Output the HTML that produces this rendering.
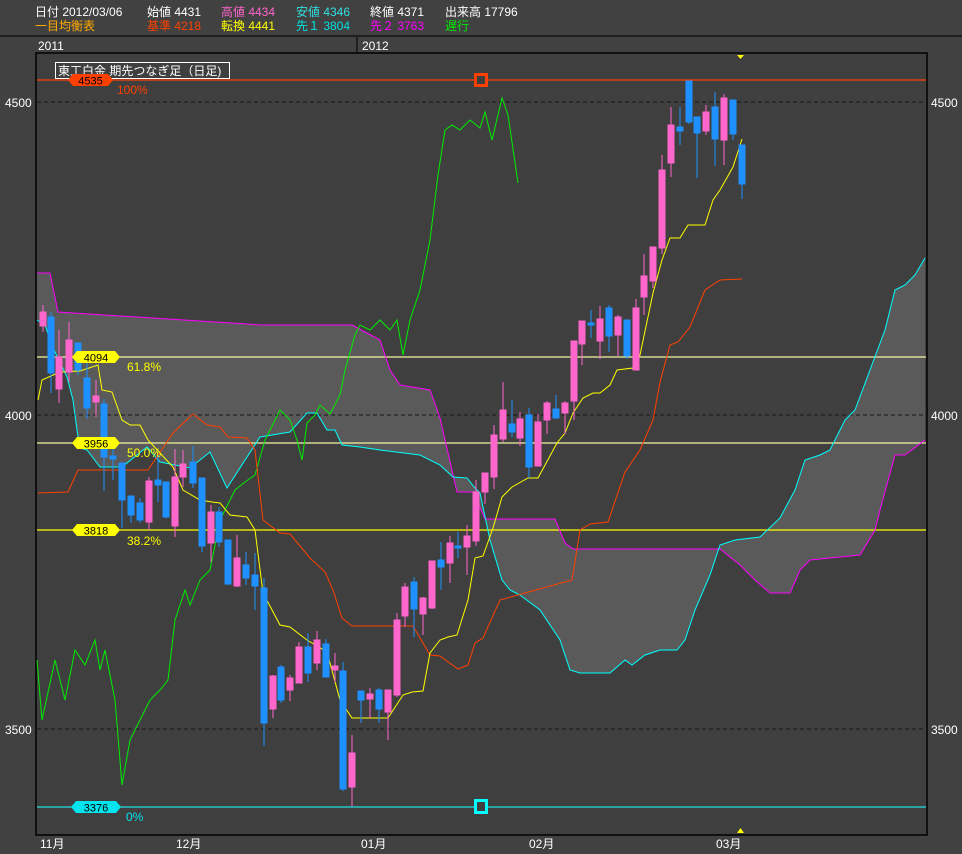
<!DOCTYPE html>
<html><head><meta charset="utf-8"><style>
html,body{margin:0;padding:0;background:#414141;width:962px;height:854px;overflow:hidden}
svg{display:block}
text{font-family:"Liberation Sans","Noto Sans CJK JP",sans-serif;font-size:12px}
</style></head><body>
<svg width="962" height="854" viewBox="0 0 962 854" xmlns="http://www.w3.org/2000/svg">
<rect width="962" height="854" fill="#414141"/>
<text x="35" y="16" fill="#fff">日付 2012/03/06</text>
<text x="147" y="16" fill="#fff">始値 4431</text>
<text x="221" y="16" fill="#ff66cc">高値 4434</text>
<text x="296" y="16" fill="#33e0e0">安値 4346</text>
<text x="370" y="16" fill="#fff">終値 4371</text>
<text x="445" y="16" fill="#fff">出来高 17796</text>
<text x="35" y="30" fill="#ffaa00">一目均衡表</text>
<text x="147" y="30" fill="#ff4000">基準 4218</text>
<text x="221" y="30" fill="#ffff00">転換 4441</text>
<text x="296" y="30" fill="#00e0e0">先１ 3804</text>
<text x="370" y="30" fill="#ff00ff">先２ 3763</text>
<text x="445" y="30" fill="#00ee00">遅行</text>
<line x1="0" y1="36" x2="962" y2="36" stroke="#000" stroke-width="1"/>
<line x1="357" y1="37" x2="357" y2="53" stroke="#000"/>
<text x="38" y="50" fill="#fff">2011</text>
<text x="362" y="50" fill="#fff">2012</text>
<rect x="36" y="53" width="891" height="782" fill="#3f3f3f" stroke="#000" stroke-width="1.5"/>
<polygon fill="#5a5a5a" points="37,320 45,325 53,348 67,377 73,400 77,430 80,448 87,450 100,467 122,467 147,447 160,462 190,468 210,452 227,488 260,437 290,432 307,413 317,413 327,430 335,430 342,445 360,447 380,450 420,455 440,465 453,477 467,478 475,488 480,493 490,540 502,580 510,590 520,595 540,610 560,640 570,670 580,673 610,673 625,660 632,665 645,655 660,650 677,650 685,640 695,610 710,575 720,545 735,540 760,537 780,518 795,490 805,460 820,455 830,450 845,420 855,410 870,370 885,330 895,290 905,285 915,275 925,258 925,440 905,455 895,455 880,510 875,530 860,555 810,560 800,570 790,593 770,593 755,580 740,565 720,549 573,549 565,543 555,519 485,519 473,492 457,492 440,418 430,390 400,385 390,370 380,340 352,325 262,325 58,312 50,273 37,273"/>
<g stroke="#151515" stroke-dasharray="4,3" stroke-width="1">
<line x1="37" y1="102" x2="926" y2="102"/>
<line x1="37" y1="415" x2="926" y2="415"/>
<line x1="37" y1="729" x2="926" y2="729"/>
</g>
<line x1="37" y1="80" x2="926" y2="80" stroke="#ff4000" stroke-width="1.2"/>
<line x1="37" y1="357" x2="926" y2="357" stroke="#f4f4a0" stroke-width="1.2"/>
<line x1="37" y1="443" x2="926" y2="443" stroke="#f4f4a0" stroke-width="1.2"/>
<line x1="37" y1="530" x2="926" y2="530" stroke="#ffff00" stroke-width="1.2"/>
<line x1="37" y1="807" x2="926" y2="807" stroke="#22dddd" stroke-width="1.2"/>
<g fill="none" stroke-width="1">
<polyline stroke="#ff00ff" points="37,273 50,273 58,312 262,325 352,325 380,340 390,370 400,385 430,390 440,418 457,492 473,492 485,519 555,519 565,543 573,549 720,549 740,565 755,580 770,593 790,593 800,570 810,560 860,555 875,530 880,510 895,455 905,455 925,440"/>
<polyline stroke="#00ffff" points="37,320 45,325 53,348 67,377 73,400 77,430 80,448 87,450 100,467 122,467 147,447 160,462 190,468 210,452 227,488 260,437 290,432 307,413 317,413 327,430 335,430 342,445 360,447 380,450 420,455 440,465 453,477 467,478 475,488 480,493 490,540 502,580 510,590 520,595 540,610 560,640 570,670 580,673 610,673 625,660 632,665 645,655 660,650 677,650 685,640 695,610 710,575 720,545 735,540 760,537 780,518 795,490 805,460 820,455 830,450 845,420 855,410 870,370 885,330 895,290 905,285 915,275 925,258"/>
<polyline stroke="#00ee00" points="37,660 42,720 55,660 65,700 75,650 85,665 95,640 100,670 105,650 115,700 122,785 130,740 140,720 150,700 160,690 168,680 175,620 185,590 190,605 200,580 210,570 220,520 235,490 245,482 255,475 265,440 270,430 280,410 290,420 297,440 302,460 307,423 315,415 320,405 330,414 340,395 345,370 355,335 360,325 370,330 380,320 390,330 397,320 403,355 410,320 420,290 430,240 438,175 445,130 452,125 460,130 470,120 480,128 485,112 492,140 502,98 508,115 518,183"/>
<polyline stroke="#ff4000" points="38,493 68,492 78,470 148,470 173,433 193,414 207,425 220,427 228,437 247,438 255,450 263,520 280,533 290,534 310,558 325,572 333,590 342,618 352,626 413,626 430,655 440,656 458,669 468,665 475,643 483,638 500,600 572,580 580,530 590,524 608,522 625,472 640,450 653,420 660,382 670,345 678,342 690,327 705,290 720,280 742,279"/>
<polyline stroke="#ffff00" points="38,400 42,380 60,372 80,371 98,365 102,390 112,392 122,420 130,425 140,425 148,440 160,453 173,467 183,490 200,500 212,502 220,503 230,515 247,517 255,530 263,593 280,625 290,627 307,640 327,652 340,700 352,718 388,718 403,695 412,692 423,691 430,653 440,640 448,637 457,635 468,600 475,558 483,556 493,528 502,497 512,487 528,478 538,478 557,443 565,433 573,413 583,398 593,393 600,393 610,385 617,370 633,368 640,355 653,293 662,260 670,238 680,238 688,225 705,225 713,200 720,190 733,167 742,139"/>
</g>
<g stroke="#ff66cc" fill="#ff66cc">
<line x1="43" y1="305" x2="43" y2="332"/><rect x="40" y="312" width="6" height="14"/>
<line x1="59" y1="330" x2="59" y2="403"/><rect x="56" y="357" width="6" height="32"/>
<line x1="69" y1="322" x2="69" y2="382"/><rect x="66" y="340" width="6" height="32"/>
<line x1="96" y1="380" x2="96" y2="417"/><rect x="93" y="396" width="6" height="6"/>
<line x1="149" y1="477" x2="149" y2="530"/><rect x="146" y="481" width="6" height="41"/>
<line x1="175" y1="449" x2="175" y2="537"/><rect x="172" y="477" width="6" height="49"/>
<line x1="183" y1="450" x2="183" y2="487"/><rect x="180" y="464" width="6" height="13"/>
<line x1="211" y1="505" x2="211" y2="562"/><rect x="208" y="512" width="6" height="31"/>
<line x1="237" y1="535" x2="237" y2="587"/><rect x="234" y="558" width="6" height="28"/>
<line x1="273" y1="675" x2="273" y2="718"/><rect x="270" y="676" width="6" height="33"/>
<line x1="290" y1="675" x2="290" y2="701"/><rect x="287" y="678" width="6" height="12"/>
<line x1="299" y1="642" x2="299" y2="683"/><rect x="296" y="647" width="6" height="36"/>
<line x1="317" y1="631" x2="317" y2="670"/><rect x="314" y="640" width="6" height="23"/>
<line x1="335" y1="653" x2="335" y2="682"/><rect x="332" y="666" width="6" height="4"/>
<line x1="352" y1="735" x2="352" y2="806"/><rect x="349" y="753" width="6" height="34"/>
<line x1="370" y1="688" x2="370" y2="718"/><rect x="367" y="694" width="6" height="5"/>
<line x1="388" y1="690" x2="388" y2="740"/><rect x="385" y="690" width="6" height="22"/>
<line x1="397" y1="613" x2="397" y2="697"/><rect x="394" y="620" width="6" height="75"/>
<line x1="405" y1="583" x2="405" y2="627"/><rect x="402" y="587" width="6" height="29"/>
<line x1="423" y1="597" x2="423" y2="635"/><rect x="420" y="598" width="6" height="16"/>
<line x1="432" y1="561" x2="432" y2="609"/><rect x="429" y="561" width="6" height="47"/>
<line x1="450" y1="536" x2="450" y2="583"/><rect x="447" y="543" width="6" height="20"/>
<line x1="467" y1="525" x2="467" y2="575"/><rect x="464" y="536" width="6" height="11"/>
<line x1="476" y1="480" x2="476" y2="546"/><rect x="473" y="492" width="6" height="49"/>
<line x1="485" y1="473" x2="485" y2="504"/><rect x="482" y="473" width="6" height="19"/>
<line x1="494" y1="425" x2="494" y2="489"/><rect x="491" y="435" width="6" height="42"/>
<line x1="503" y1="382" x2="503" y2="442"/><rect x="500" y="410" width="6" height="29"/>
<line x1="520" y1="412" x2="520" y2="446"/><rect x="517" y="419" width="6" height="19"/>
<line x1="538" y1="414" x2="538" y2="466"/><rect x="535" y="422" width="6" height="44"/>
<line x1="547" y1="401" x2="547" y2="434"/><rect x="544" y="403" width="6" height="17"/>
<line x1="565" y1="401" x2="565" y2="434"/><rect x="562" y="403" width="6" height="10"/>
<line x1="574" y1="341" x2="574" y2="420"/><rect x="571" y="341" width="6" height="60"/>
<line x1="582" y1="321" x2="582" y2="365"/><rect x="579" y="321" width="6" height="23"/>
<line x1="600" y1="306" x2="600" y2="359"/><rect x="597" y="319" width="6" height="22"/>
<line x1="618" y1="315" x2="618" y2="356"/><rect x="615" y="317" width="6" height="18"/>
<line x1="636" y1="299" x2="636" y2="370"/><rect x="633" y="308" width="6" height="62"/>
<line x1="644" y1="254" x2="644" y2="315"/><rect x="641" y="276" width="6" height="21"/>
<line x1="653" y1="247" x2="653" y2="288"/><rect x="650" y="247" width="6" height="34"/>
<line x1="662" y1="155" x2="662" y2="254"/><rect x="659" y="170" width="6" height="78"/>
<line x1="671" y1="107" x2="671" y2="177"/><rect x="668" y="125" width="6" height="38"/>
<line x1="706" y1="105" x2="706" y2="135"/><rect x="703" y="112" width="6" height="19"/>
<line x1="724" y1="94" x2="724" y2="165"/><rect x="721" y="98" width="6" height="42"/>
</g>
<g stroke="#1e90ff" fill="#1e90ff">
<line x1="51" y1="312" x2="51" y2="393"/><rect x="48" y="317" width="6" height="56"/>
<line x1="78" y1="343" x2="78" y2="375"/><rect x="75" y="343" width="6" height="27"/>
<line x1="87" y1="362" x2="87" y2="419"/><rect x="84" y="378" width="6" height="30"/>
<line x1="104" y1="399" x2="104" y2="491"/><rect x="101" y="404" width="6" height="53"/>
<line x1="113" y1="443" x2="113" y2="480"/><rect x="110" y="456" width="6" height="3"/>
<line x1="122" y1="463" x2="122" y2="528"/><rect x="119" y="463" width="6" height="37"/>
<line x1="131" y1="496" x2="131" y2="523"/><rect x="128" y="496" width="6" height="19"/>
<line x1="140" y1="498" x2="140" y2="523"/><rect x="137" y="503" width="6" height="17"/>
<line x1="158" y1="455" x2="158" y2="502"/><rect x="155" y="480" width="6" height="5"/>
<line x1="166" y1="482" x2="166" y2="518"/><rect x="163" y="482" width="6" height="35"/>
<line x1="193" y1="446" x2="193" y2="488"/><rect x="190" y="462" width="6" height="21"/>
<line x1="202" y1="478" x2="202" y2="552"/><rect x="199" y="478" width="6" height="68"/>
<line x1="219" y1="507" x2="219" y2="547"/><rect x="216" y="512" width="6" height="30"/>
<line x1="228" y1="540" x2="228" y2="585"/><rect x="225" y="540" width="6" height="44"/>
<line x1="246" y1="552" x2="246" y2="585"/><rect x="243" y="565" width="6" height="13"/>
<line x1="255" y1="553" x2="255" y2="610"/><rect x="252" y="575" width="6" height="11"/>
<line x1="264" y1="578" x2="264" y2="746"/><rect x="261" y="588" width="6" height="135"/>
<line x1="281" y1="665" x2="281" y2="703"/><rect x="278" y="667" width="6" height="33"/>
<line x1="308" y1="633" x2="308" y2="682"/><rect x="305" y="647" width="6" height="26"/>
<line x1="326" y1="639" x2="326" y2="677"/><rect x="323" y="644" width="6" height="33"/>
<line x1="343" y1="662" x2="343" y2="791"/><rect x="340" y="671" width="6" height="118"/>
<line x1="361" y1="691" x2="361" y2="723"/><rect x="358" y="691" width="6" height="9"/>
<line x1="379" y1="688" x2="379" y2="723"/><rect x="376" y="690" width="6" height="19"/>
<line x1="414" y1="577" x2="414" y2="637"/><rect x="411" y="582" width="6" height="27"/>
<line x1="441" y1="542" x2="441" y2="590"/><rect x="438" y="560" width="6" height="7"/>
<line x1="458" y1="532" x2="458" y2="558"/><rect x="455" y="546" width="6" height="2"/>
<line x1="512" y1="400" x2="512" y2="437"/><rect x="509" y="424" width="6" height="8"/>
<line x1="529" y1="408" x2="529" y2="478"/><rect x="526" y="415" width="6" height="52"/>
<line x1="556" y1="395" x2="556" y2="418"/><rect x="553" y="409" width="6" height="9"/>
<line x1="591" y1="310" x2="591" y2="338"/><rect x="588" y="323" width="6" height="2"/>
<line x1="609" y1="305" x2="609" y2="352"/><rect x="606" y="308" width="6" height="28"/>
<line x1="627" y1="320" x2="627" y2="359"/><rect x="624" y="320" width="6" height="36"/>
<line x1="680" y1="107" x2="680" y2="145"/><rect x="677" y="127" width="6" height="4"/>
<line x1="689" y1="81" x2="689" y2="124"/><rect x="686" y="81" width="6" height="41"/>
<line x1="697" y1="117" x2="697" y2="178"/><rect x="694" y="117" width="6" height="16"/>
<line x1="715" y1="92" x2="715" y2="166"/><rect x="712" y="107" width="6" height="32"/>
<line x1="733" y1="100" x2="733" y2="140"/><rect x="730" y="100" width="6" height="34"/>
<line x1="742" y1="145" x2="742" y2="199"/><rect x="739" y="145" width="6" height="39"/>
</g>
<rect x="55.5" y="62.5" width="174" height="16" fill="#3f3f3f" stroke="#fff"/>
<text x="58" y="75" fill="#fff">東工白金 期先つなぎ足（日足)</text>
<polygon points="68,80 73,74 108,74 113,80 108,86 73,86" fill="#ff4000"/>
<text x="90.5" y="84.5" text-anchor="middle" fill="#000" style="font-size:11px">4535</text>
<text x="117" y="94" fill="#ff4000">100%</text>
<polygon points="72,357 77,351 115,351 120,357 115,363 77,363" fill="#ffff00"/>
<text x="96" y="361.5" text-anchor="middle" fill="#000" style="font-size:11px">4094</text>
<text x="127" y="371" fill="#ffff00">61.8%</text>
<polygon points="72,443 77,437 115,437 120,443 115,449 77,449" fill="#ffff00"/>
<text x="96" y="447.5" text-anchor="middle" fill="#000" style="font-size:11px">3956</text>
<text x="127" y="457" fill="#ffff00">50.0%</text>
<polygon points="72,530 77,524 115,524 120,530 115,536 77,536" fill="#ffff00"/>
<text x="96" y="534.5" text-anchor="middle" fill="#000" style="font-size:11px">3818</text>
<text x="127" y="545" fill="#ffff00">38.2%</text>
<polygon points="71,807 76,801 116,801 121,807 116,813 76,813" fill="#00e5ee"/>
<text x="96" y="811.5" text-anchor="middle" fill="#000" style="font-size:11px">3376</text>
<text x="126" y="821" fill="#00e5ee">0%</text>
<rect x="475.5" y="74.5" width="11" height="11" fill="#3f3f3f" stroke="#ff4000" stroke-width="3"/>
<rect x="475.5" y="800.5" width="11" height="12" fill="#3f3f3f" stroke="#00ffff" stroke-width="3"/>
<polygon points="737,55 744,55 740.5,59" fill="#ffff00"/>
<polygon points="737,833 744,833 740.5,828" fill="#ffff00"/>
<text x="5" y="107" fill="#fff">4500</text>
<text x="5" y="420" fill="#fff">4000</text>
<text x="5" y="734" fill="#fff">3500</text>
<text x="931" y="107" fill="#fff">4500</text>
<text x="931" y="420" fill="#fff">4000</text>
<text x="931" y="734" fill="#fff">3500</text>
<text x="40" y="848" fill="#fff">11月</text>
<text x="176" y="848" fill="#fff">12月</text>
<text x="361" y="848" fill="#fff">01月</text>
<text x="529" y="848" fill="#fff">02月</text>
<text x="716" y="848" fill="#fff">03月</text>
</svg>
</body></html>
